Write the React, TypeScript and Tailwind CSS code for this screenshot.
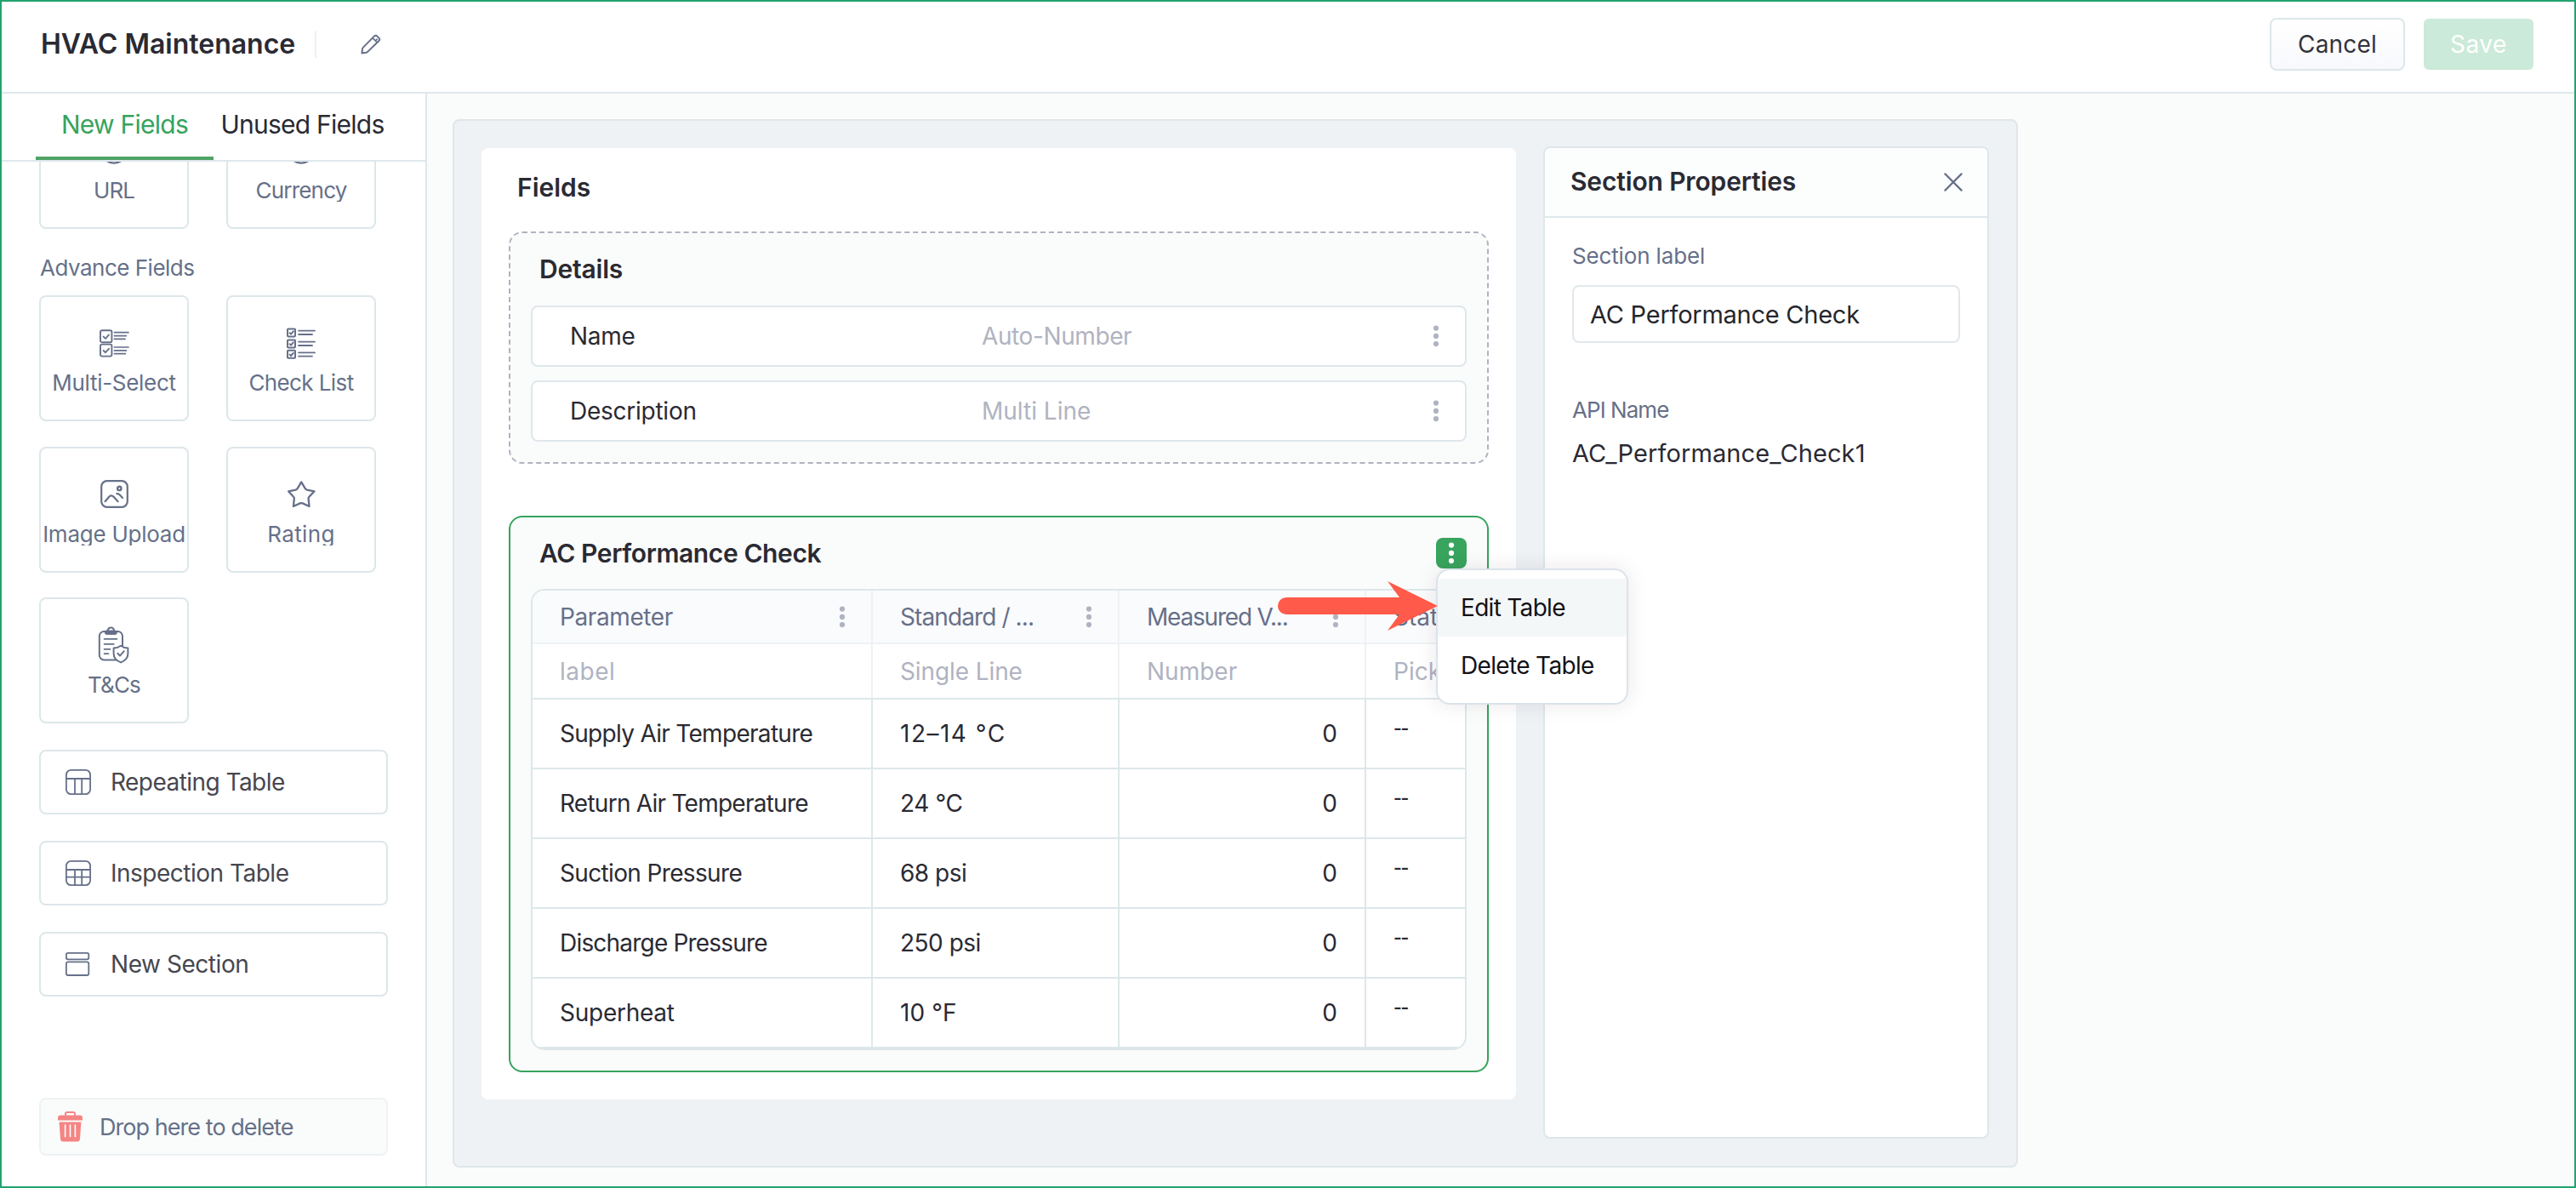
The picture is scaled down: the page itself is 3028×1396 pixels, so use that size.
import { useState, type ReactNode } from 'react';
import clsx from 'clsx';

/* ---------- Icons ---------- */

const PencilIcon = () => (
  <svg width="26" height="26" viewBox="0 0 26 26" fill="none" stroke="#667089" strokeWidth="2" strokeLinejoin="round">
    <path d="M2.4 23.4 L3 18.4 Q3.2 17.4 4 16.6 L16.8 3.6 Q18.6 2 20.4 3.6 L22.4 5.6 Q24 7.4 22.4 9 L9.4 21.6 Q8.6 22.6 7.4 22.8 Z" />
    <path d="M15 5.6 L20.4 11 M18.2 9 L20.6 6.6" strokeWidth="1.7" />
  </svg>
);

const MultiSelectIcon = () => (
  <svg width="35" height="33" viewBox="0 0 35 33" fill="none" stroke="#667089" strokeWidth="1.9" strokeLinecap="round" strokeLinejoin="round">
    <rect x="1" y="1.2" width="13.4" height="14" rx="1.8" />
    <rect x="1" y="17.6" width="13.4" height="14" rx="1.8" />
    <path d="M4.6 8.6 L7 10.8 L11 6.4 M4.6 25 L7 27.2 L11 22.8" />
    <path d="M17.4 3.6 H34 M17.4 7.6 H31.4 M17.4 11.4 H30 M17.4 21 H34 M17.4 24.8 H31.4 M17.4 28.6 H30.4" strokeWidth="1.7" />
  </svg>
);

const CheckListIcon = () => (
  <svg width="34" height="37" viewBox="0 0 34 37" fill="none" stroke="#667089" strokeWidth="2" strokeLinecap="round" strokeLinejoin="round">
    <rect x="1" y="1.4" width="9" height="9" rx="0.8" />
    <rect x="1" y="14.4" width="9" height="9" rx="0.8" />
    <rect x="1" y="26.8" width="9" height="9" rx="0.8" />
    <path d="M3.6 6.2 L5 7.6 L7.8 4.4 M3.6 19.2 L5 20.6 L7.8 17.4 M3.6 31.6 L5 33 L7.8 29.8" />
    <path d="M14 3.6 H33 M14 8 H30 M14 16.6 H33 M14 21 H30 M14 29.4 H33 M14 33.6 H30" strokeWidth="1.8" />
  </svg>
);

const ImageIcon = () => (
  <svg width="33" height="33" viewBox="0 0 33 33" fill="none" stroke="#667089" strokeWidth="2.2" strokeLinecap="round">
    <rect x="1.2" y="1.2" width="30.6" height="30.6" rx="6.5" />
    <circle cx="22.3" cy="9.9" r="2.2" strokeWidth="2.4" />
    <path d="M5.6 25.2 L10.2 19.8 Q12.8 17 15.4 19.6 L20.6 25.2 M19.4 16.2 Q21.4 16 22.8 17.6 L26 21" />
  </svg>
);

const StarIcon = () => (
  <svg width="33" height="32" viewBox="0 0 33 32" fill="none" stroke="#667089" strokeWidth="2.3" strokeLinejoin="round">
    <path d="M16.2 1.4 L20.6 8.8 Q21.3 10.2 22.8 10.6 L31.4 12.4 L25.4 18.8 Q24.4 19.8 24.6 21.2 L25.5 30 L17.6 26.4 Q16.2 25.8 14.8 26.4 L6.9 30 L7.8 21.2 Q8 19.8 7 18.8 L1.2 12.4 L9.6 10.6 Q11.1 10.2 11.8 8.8 Z" />
  </svg>
);

const TermsIcon = () => (
  <svg width="38" height="44" viewBox="0 0 38 44" fill="none" stroke="#667089" strokeWidth="2" strokeLinecap="round" strokeLinejoin="round">
    <rect x="1.8" y="6" width="27.2" height="33.4" rx="5.5" />
    <rect x="8.4" y="5" width="14" height="4.4" rx="2" fill="#667089" strokeWidth="1" />
    <path d="M11.8 5 Q12 1.4 15.4 1.4 Q18.8 1.4 19 5" />
    <path d="M7.6 14.8 H22.4 M7.6 20.8 H18.8 M7.6 26.8 H14.4 M7.6 32.2 H12.4" strokeWidth="1.8" />
    <path d="M27 22.8 Q30.6 25.6 35.4 25.6 V32 Q35.4 39 27 42.4 Q18.6 39 18.6 32 V25.6 Q23.4 25.6 27 22.8 Z" fill="#fff" />
    <path d="M23.4 31.8 L26 34.6 L30.8 29.2" />
  </svg>
);

const RoundIcon = () => (
  <svg width="32" height="32" viewBox="0 0 32 32" fill="none" stroke="#667089" strokeWidth="2.4">
    <circle cx="16" cy="16" r="14.6" />
  </svg>
);

const RepeatingTableIcon = () => (
  <svg width="30" height="30" viewBox="0 0 30 30" fill="none" stroke="#667089" strokeWidth="1.8">
    <rect x="0.9" y="0.9" width="28.2" height="28.2" rx="5.5" />
    <path d="M1 11 H29 M11 11 V29 M19.2 11 V29" />
  </svg>
);

const InspectionTableIcon = () => (
  <svg width="30" height="30" viewBox="0 0 30 30" fill="none" stroke="#667089" strokeWidth="1.8">
    <rect x="0.9" y="0.9" width="28.2" height="28.2" rx="5.5" />
    <path d="M1 11 H29 M1 19.6 H29 M11 11 V29 M19.2 11 V29" />
  </svg>
);

const SectionIcon = () => (
  <svg width="30" height="28" viewBox="0 0 30 28" fill="none" stroke="#667089" strokeWidth="1.8">
    <rect x="0.9" y="0.9" width="26.4" height="7.4" rx="2" />
    <rect x="0.9" y="11.4" width="26.4" height="15.6" rx="2" />
  </svg>
);

const TrashIcon = () => (
  <svg width="29" height="36" viewBox="0 0 29 36" fill="#f48584">
    <path d="M9 5 V3 Q9 1 11 1 H18 Q20 1 20 3 V5" fill="none" stroke="#f48584" strokeWidth="2" />
    <path d="M3 4.6 H26 Q29 4.6 29 8 V10.6 H0 V8 Q0 4.6 3 4.6 Z" />
    <path d="M1.6 12.6 H27.4 L26 32.6 Q25.6 35.6 22.8 35.6 H6.2 Q3.4 35.6 3 32.6 Z" />
    <path d="M8.6 16 V29.6 M14.5 16 V29.6 M20.4 16 V29.6" stroke="#fff" strokeWidth="1.6" strokeLinecap="round" />
  </svg>
);

const CloseIcon = () => (
  <svg width="22" height="22" viewBox="0 0 22 22" fill="none" stroke="#667089" strokeWidth="2.2" strokeLinecap="round">
    <path d="M1.4 1.4 L20.6 20.6 M20.6 1.4 L1.4 20.6" />
  </svg>
);

const DotsIcon = ({ color = '#b0b3c1' }: { color?: string }) => (
  <svg width="8" height="26" viewBox="0 0 8 26" fill={color} className="shrink-0">
    <circle cx="4" cy="3.6" r="3.1" />
    <circle cx="4" cy="12.9" r="3.1" />
    <circle cx="4" cy="22.1" r="3.1" />
  </svg>
);

/* ---------- Data ---------- */

type Field = { label: string; icon: ReactNode; tracking: string };

const basicFields: Field[] = [
  { label: 'URL', icon: <RoundIcon />, tracking: 'tracking-[-1px]' },
  { label: 'Currency', icon: <RoundIcon />, tracking: 'tracking-[-0.8px]' },
];

const advanceFields: Field[] = [
  { label: 'Multi-Select', icon: <MultiSelectIcon />, tracking: 'tracking-[-0.3px]' },
  { label: 'Check List', icon: <CheckListIcon />, tracking: 'tracking-[-0.6px]' },
  { label: 'Image Upload', icon: <ImageIcon />, tracking: 'tracking-[-0.25px]' },
  { label: 'Rating', icon: <StarIcon />, tracking: 'tracking-[0.4px]' },
  { label: 'T&Cs', icon: <TermsIcon />, tracking: 'tracking-[-0.9px]' },
];

const blocks: Field[] = [
  { label: 'Repeating Table', icon: <RepeatingTableIcon />, tracking: 'tracking-[-0.55px]' },
  { label: 'Inspection Table', icon: <InspectionTableIcon />, tracking: 'tracking-[-0.5px]' },
  { label: 'New Section', icon: <SectionIcon />, tracking: 'tracking-[-0.45px]' },
];

const detailRows = [
  { label: 'Name', type: 'Auto-Number', tracking: 'tracking-[-0.4px]' },
  { label: 'Description', type: 'Multi Line', tracking: 'tracking-normal' },
];

const columns = [
  { title: 'Parameter', type: 'label', width: 'w-[400px]', tracking: 'tracking-[-0.4px]', typeTracking: 'tracking-[0.5px]' },
  { title: 'Standard / ...', type: 'Single Line', width: 'w-[290px]', tracking: 'tracking-[-0.9px]', typeTracking: 'tracking-[-0.1px]' },
  { title: 'Measured V...', type: 'Number', width: 'w-[290px]', tracking: 'tracking-[-1.2px]', typeTracking: 'tracking-normal' },
];

const rows = [
  { parameter: 'Supply Air Temperature', standard: '12–14 °C', tracking: 'tracking-[-0.7px]', valueTracking: 'tracking-[1.5px]' },
  { parameter: 'Return Air Temperature', standard: '24 °C', tracking: 'tracking-[-0.75px]', valueTracking: 'tracking-[-0.4px]' },
  { parameter: 'Suction Pressure', standard: '68 psi', tracking: 'tracking-[-0.65px]', valueTracking: 'tracking-[-0.5px]' },
  { parameter: 'Discharge Pressure', standard: '250 psi', tracking: 'tracking-[-0.8px]', valueTracking: 'tracking-[-0.5px]' },
  { parameter: 'Superheat', standard: '10 °F', tracking: 'tracking-[-0.25px]', valueTracking: 'tracking-[0.1px]' },
];

/* ---------- Pieces ---------- */

function FieldCard({ field }: { field: Field }) {
  return (
    <div className="flex h-[148px] w-[176px] flex-col items-center rounded-lg border-2 border-[#dde7ea] bg-white pt-8">
      <div className="flex h-11 items-center justify-center">{field.icon}</div>
      <span className={clsx('mt-[11px] h-[27px] overflow-hidden text-[26px] leading-[27px] whitespace-nowrap text-[#667089]', field.tracking)}>
        {field.label}
      </span>
    </div>
  );
}

function Sidebar() {
  const [tab, setTab] = useState('New Fields');

  return (
    <aside className="flex w-[500px] shrink-0 flex-col border-r-2 border-[#dfe7ec] bg-white">
      <div className="flex h-20 shrink-0 border-b-2 border-[#dfe7ec] pl-10 text-[30px] tracking-[-0.75px]">
        {['New Fields', 'Unused Fields'].map((name) => (
          <button
            key={name}
            onClick={() => setTab(name)}
            className={clsx(
              'flex h-[78px] w-[209px] items-center justify-center border-b-4 pb-[2px] whitespace-nowrap',
              tab === name ? 'border-[#4fa365] text-[#37a35c]' : 'border-transparent text-[#2a2a33]'
            )}
          >
            {name}
          </button>
        ))}
      </div>

      <div className="flex min-h-0 flex-1 flex-col overflow-hidden pb-9 pl-11">
        <div className="-mt-[69px] grid shrink-0 grid-cols-[176px_176px] gap-x-11">
          {basicFields.map((f) => (
            <FieldCard key={f.label} field={f} />
          ))}
        </div>

        <h3 className="mt-6 mb-[11px] shrink-0 pl-px text-[26px] leading-[43px] tracking-[-0.5px] text-[#667089]">Advance Fields</h3>

        <div className="grid shrink-0 grid-cols-[176px_176px] gap-x-11 gap-y-[29.5px]">
          {advanceFields.map((f) => (
            <FieldCard key={f.label} field={f} />
          ))}
        </div>

        <div className="mt-[30.5px] flex flex-col gap-[31px]">
          {blocks.map((b) => (
            <div key={b.label} className="flex h-19 w-[410px] items-center rounded-lg border-2 border-[#dde7ea] bg-white pl-[29px]">
              {b.icon}
              <span className={clsx('ml-[23px] text-[28px] leading-none text-[#47474f]', b.tracking)}>{b.label}</span>
            </div>
          ))}
        </div>

        {/* Delete drop zone */}
        <div className="mt-auto flex h-[68px] w-[410px] shrink-0 items-center rounded-lg border-2 border-[#eef2f5] bg-[#fafcfb] pl-5">
          <TrashIcon />
          <span className="ml-5 text-[27px] leading-none tracking-[-0.95px] text-[#667089]">Drop here to delete</span>
        </div>
      </div>
    </aside>
  );
}

function SectionMenu() {
  return (
    <div className="absolute top-9 left-0 z-20 w-[226px] rounded-[16px] border-2 border-[#dbe3ea] bg-white py-[10px] text-[28px] text-[#121217] shadow-[0_0_24px_rgba(60,20,30,0.10)]">
      <button className="flex h-[68px] w-full items-center bg-[#f4f7f8] pl-[27px] tracking-[-0.7px]">Edit Table</button>
      <button className="flex h-[68px] w-full items-center pl-[27px] tracking-[-0.67px]">Delete Table</button>
    </div>
  );
}

function PerformanceTable() {
  return (
    <div className="flex h-[542px] w-[1100px] flex-col overflow-hidden rounded-[16px] border-2 border-[#dde7ea] bg-white text-[28px] whitespace-nowrap">
      <div className="flex h-[63px] shrink-0 border-b-2 border-[#eef2f5] bg-[#fafbfd] text-[#667089]">
        {columns.map((c) => (
          <div key={c.title} className={clsx('flex shrink-0 items-center justify-between border-r-2 border-[#eef2f5] pr-[30px] pl-8', c.width)}>
            <span className={c.tracking}>{c.title}</span>
            <DotsIcon />
          </div>
        ))}
        <div className="flex items-center pl-8">Status</div>
      </div>

      <div className="flex h-[65px] shrink-0 border-b-2 border-[#dde7ea] text-[#b0b3c1]">
        {columns.map((c) => (
          <div key={c.type} className={clsx('flex shrink-0 items-center border-r-2 border-[#eef2f5] pl-8', c.width, c.typeTracking)}>
            {c.type}
          </div>
        ))}
        <div className="flex items-center pl-8">Pick</div>
      </div>

      {rows.map((r) => (
        <div key={r.parameter} className="flex h-[82px] shrink-0 border-b-2 border-[#dde7ea] text-[#2a2a33]">
          <div className={clsx('flex w-[400px] shrink-0 items-center border-r-2 border-[#dde7ea] pl-8', r.tracking)}>{r.parameter}</div>
          <div className={clsx('flex w-[290px] shrink-0 items-center border-r-2 border-[#dde7ea] pl-8', r.valueTracking)}>{r.standard}</div>
          <div className="flex w-[290px] shrink-0 items-center justify-end border-r-2 border-[#dde7ea] pr-8">0</div>
          <div className="flex items-center pb-[13px] pl-8 text-[21px] font-semibold tracking-[-1.2px]">--</div>
        </div>
      ))}
    </div>
  );
}

function Builder() {
  return (
    <div className="h-[1118px] w-[1216px] shrink-0 rounded-lg bg-white px-8">
      <h2 className="mb-[6px] pl-[10px] text-[30px] leading-[92px] font-semibold text-[#2a2a33]">Fields</h2>

      <section className="h-[273px] rounded-[16px] border-2 border-dashed border-[#b0b3c1] bg-[#fafcfb] px-6">
        <h3 className="pl-[10px] text-[30px] leading-[85px] font-semibold tracking-[-0.2px] text-[#2a2a33]">Details</h3>
        <div className="flex flex-col gap-4 text-[28px]">
          {detailRows.map((r) => (
            <div key={r.label} className="flex h-[72px] items-center rounded-lg border-2 border-[#dfe7ec] bg-white pr-[30px] pl-[44px]">
              <span className="w-[484px] tracking-[-0.25px] text-[#2a2a33]">{r.label}</span>
              <span className={clsx('flex-1 text-[#b0b3c1]', r.tracking)}>{r.type}</span>
              <DotsIcon />
            </div>
          ))}
        </div>
      </section>

      <section className="relative mt-[61px] h-[654px] rounded-[16px] border-2 border-[#37a35c] bg-[#fafcfb] px-6">
        <div className="flex h-[84px] items-center justify-between pl-[10px]">
          <h3 className="text-[30px] font-semibold tracking-[-0.4px] text-[#2a2a33]">AC Performance Check</h3>
          <div className="relative h-9 w-9">
            <button className="flex h-9 w-9 items-center justify-center rounded-lg bg-[#38a45d]">
              <DotsIcon color="#ffffff" />
            </button>
            <SectionMenu />
          </div>
        </div>

        <PerformanceTable />

        {/* Callout arrow */}
        <svg className="absolute top-[73px] left-[900px] z-30" width="190" height="62" viewBox="0 0 190 62" fill="#ff5a4a">
          <path d="M12 21 H145 L131 2 L190 31 L131 60 L145 41 H12 A10 10 0 0 1 12 21 Z" />
        </svg>
      </section>
    </div>
  );
}

function PropertiesPanel() {
  const [label, setLabel] = useState('AC Performance Check');

  return (
    <aside className="-mt-[2px] ml-8 h-[1166px] w-[524px] shrink-0 overflow-hidden rounded-lg border-2 border-[#dde7ea] bg-white">
      <div className="flex h-[82px] items-center justify-between border-b-2 border-[#dde7ea] bg-[#fcfdfd] pr-[29px] pl-[30px]">
        <h2 className="pb-px text-[30px] font-semibold tracking-[-0.15px] text-[#2a2a33]">Section Properties</h2>
        <CloseIcon />
      </div>
      <div className="flex flex-col px-8 pt-6 text-[#667089]">
        <label className="text-[26px] leading-[42px] tracking-[-0.15px]">Section label</label>
        <input
          value={label}
          onChange={(e) => setLabel(e.target.value)}
          className="mt-[13px] h-[68px] w-[456px] rounded-lg border-2 border-[#e1e8eb] bg-white pl-[19px] text-[29px] tracking-[-0.25px] text-[#26262b] outline-none"
        />
        <span className="mt-[58px] text-[26px] leading-[42px] tracking-[-0.95px]">API Name</span>
        <span className="mt-[10px] text-[29px] leading-[40px] tracking-[0.1px] text-[#2a2a33]">AC_Performance_Check1</span>
      </div>
    </aside>
  );
}

export default function App() {
  return (
    <div className="flex h-[1396px] w-[3028px] flex-col overflow-hidden border-2 border-[#22a36f] bg-white font-['Inter','Liberation_Sans',sans-serif]">
      {/* Top bar */}
      <header className="flex h-[108px] shrink-0 items-center border-b-2 border-[#dfe7ec] pr-12 pb-[6px] pl-[46px]">
        <h1 className="text-[32px] font-semibold text-[#2a2a33]">HVAC Maintenance</h1>
        <div className="ml-[23px] h-8 w-[2px] bg-[#edf1f4]" />
        <button className="ml-[51px]">
          <PencilIcon />
        </button>
        <div className="ml-auto flex items-center gap-[22px] text-[28px]">
          <button className="h-[62px] w-[159px] rounded-lg border-2 border-[#dde7ea] bg-linear-to-b from-white to-[#f8f9fc] tracking-[0.2px] text-[#33333b]">Cancel</button>
          <button className="h-15 w-[129px] rounded-[6px] bg-[#cbead9] tracking-[0.5px] text-white">Save</button>
        </div>
      </header>

      <div className="flex min-h-0 flex-1">
        <Sidebar />
        <main className="min-w-0 flex-1 bg-[#fafcfb] pt-[30px] pl-[30px]">
          <div className="flex h-[1232px] w-[1840px] rounded-lg border-2 border-[#dfe6ea] bg-[#eef2f5] p-8">
            <Builder />
            <PropertiesPanel />
          </div>
        </main>
      </div>
    </div>
  );
}
